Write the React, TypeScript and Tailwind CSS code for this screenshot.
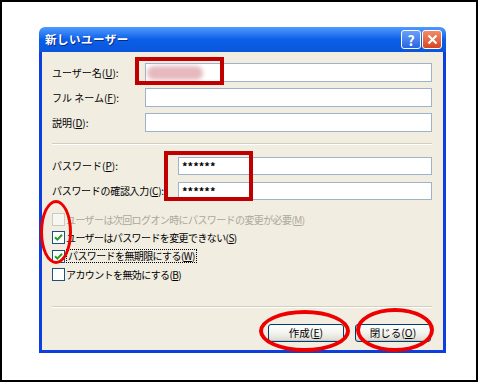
import React from 'react';

const Key = ({ k }: { k: string }) => (
  <>
    (<span className="underline underline-offset-1">{k}</span>)
  </>
);

const TextBox = ({ className, children }: { className: string; children?: React.ReactNode }) => (
  <div className={`relative flex items-center border border-[#9fb2cc] bg-white ${className}`}>{children}</div>
);

const Check = ({ checked, disabled }: { checked?: boolean; disabled?: boolean }) => (
  <div
    className={`flex h-[13px] w-[13px] shrink-0 items-center justify-center border ${
      disabled ? 'border-[#cdcbc0] bg-[#f7f6f1]' : 'border-[#1c5180] bg-white'
    }`}
  >
    {checked && (
      <svg width="9" height="9" viewBox="0 0 9 9">
        <path d="M1 4.2 L3.4 6.6 L8 1.8" fill="none" stroke="#21a121" strokeWidth="2" />
      </svg>
    )}
  </div>
);

const XpButton = ({ children }: { children: React.ReactNode }) => (
  <div className="flex h-[18px] w-[76px] items-center justify-center rounded-[3px] border border-[#003c74] bg-gradient-to-b from-white via-[#f3f3ef] to-[#dcdad0] text-[10.5px] text-black shadow-[inset_0_-1px_0_#c9c6b8]">
    {children}
  </div>
);

export default function App() {
  return (
    <div className="relative h-[382px] w-[478px] border-2 border-black bg-white font-['Noto_Sans_CJK_JP',sans-serif] text-[10px] leading-none text-black">
      <div className="ml-[37px] mt-[25px] flex h-[326px] w-[407px] flex-col">
        {/* title bar */}
        <div className="flex h-[25px] shrink-0 items-center rounded-t-[6px] bg-gradient-to-b from-[#4d9bff] via-[#0b5fe8] to-[#0a56da] pl-[6px] pr-[4px]">
          <span className="text-[11.5px] font-bold tracking-[0.5px] text-white [text-shadow:1px_1px_0_#0a2a8a]">新しいユーザー</span>
          <div className="ml-auto flex gap-[1px]">
            <div className="flex h-[19px] w-[20px] items-center justify-center rounded-[3px] border border-white bg-gradient-to-b from-[#6aa0f8] to-[#2a64e2] text-[14px] font-bold text-white">
              ?
            </div>
            <div className="flex h-[19px] w-[20px] items-center justify-center rounded-[3px] border border-white bg-gradient-to-b from-[#f08c6a] to-[#d8431c]">
              <svg width="11" height="11" viewBox="0 0 11 11">
                <path d="M1.5 1.5 L9.5 9.5 M9.5 1.5 L1.5 9.5" stroke="white" strokeWidth="2.2" />
              </svg>
            </div>
          </div>
        </div>

        {/* body */}
        <div className="flex flex-1 flex-col border-x-[3px] border-b-[3px] border-[#0c3ee0] bg-[#f1ede1] pl-[10px] pr-[11px] pt-[11px]">
          <div className="flex flex-col gap-[6px]">
            <div className="flex items-center">
              <span className="w-[93px]">ユーザー名<Key k="U" />:</span>
              <TextBox className="h-[19px] flex-1">
                <div className="ml-[1px] h-[14px] w-[56px] rounded-full bg-[#e6b9bf] blur-[2px]" />
              </TextBox>
            </div>
            <div className="flex items-center">
              <span className="w-[93px]">フル ネーム<Key k="F" />:</span>
              <TextBox className="h-[19px] flex-1" />
            </div>
            <div className="flex items-center">
              <span className="w-[93px]">説明<Key k="D" />:</span>
              <TextBox className="h-[19px] flex-1" />
            </div>
          </div>

          <div className="mt-[11px] border-t border-[#d3cfc0] border-b border-b-white" />

          <div className="mt-[12px] flex flex-col gap-[7px]">
            <div className="flex items-center">
              <span className="w-[126px]">パスワード<Key k="P" />:</span>
              <TextBox className="h-[18px] flex-1">
                <span className="pl-[3px] text-[11px] font-bold">******</span>
              </TextBox>
            </div>
            <div className="flex items-center">
              <span className="w-[126px] whitespace-nowrap tracking-[-0.3px]">パスワードの確認入力<Key k="C" />:</span>
              <TextBox className="h-[18px] flex-1">
                <span className="pl-[3px] text-[11px] font-bold">******</span>
              </TextBox>
            </div>
          </div>

          <div className="mt-[13px] flex flex-col gap-[5px]">
            <div className="flex items-center gap-[1px] text-[#aca899]">
              <Check disabled />
              <span className="tracking-[-0.6px]">ユーザーは次回ログオン時にパスワードの変更が必要<Key k="M" /></span>
            </div>
            <div className="flex items-center gap-[1px]">
              <Check checked />
              <span className="tracking-[-0.6px]">ユーザーはパスワードを変更できない<Key k="S" /></span>
            </div>
            <div className="flex items-center gap-[1px]">
              <Check checked />
              <span className="border border-dotted border-black px-[1px] py-[1px] tracking-[-0.6px]">パスワードを無期限にする<Key k="W" /></span>
            </div>
            <div className="flex items-center gap-[1px]">
              <Check />
              <span className="tracking-[-0.6px]">アカウントを無効にする<Key k="B" /></span>
            </div>
          </div>

          <div className="mt-[25px] border-t border-[#d3cfc0] border-b border-b-white" />

          <div className="mt-[16px] flex justify-end gap-[11px] pr-[1px]">
            <XpButton>作成<Key k="E" /></XpButton>
            <XpButton>閉じる<Key k="O" /></XpButton>
          </div>
        </div>
      </div>

      {/* annotations */}
      <div className="absolute left-[133px] top-[55px] h-[28px] w-[89px] border-4 border-[#c00000]" />
      <div className="absolute left-[162px] top-[149px] h-[50px] w-[89px] border-4 border-[#c00000]" />
      <div className="absolute left-[38px] top-[198px] h-[64px] w-[32px] rounded-[50%] border-[3px] border-[#ee0000]" />
      <div className="absolute left-[257px] top-[308px] h-[42px] w-[91px] rounded-[50%] border-4 border-[#ee0000]" />
      <div className="absolute left-[354px] top-[306px] h-[44px] w-[78px] rounded-[50%] border-4 border-[#ee0000]" />
    </div>
  );
}
